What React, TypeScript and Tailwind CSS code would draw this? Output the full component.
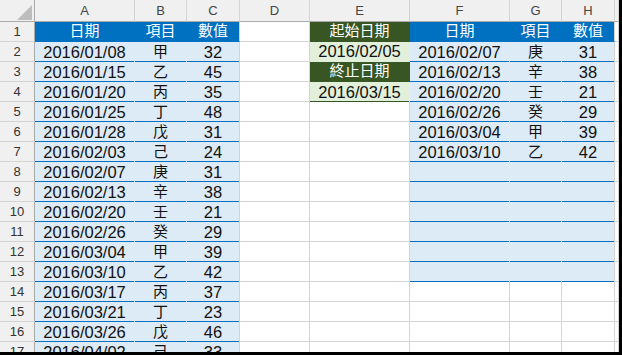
import React from "react";

type Kind =
  | "white"
  | "blueHead"
  | "blueHeadEnd"
  | "blueBody"
  | "blueBodyEnd"
  | "greenHead"
  | "greenBody"
  | "greenBodyEnd";

// gridlines are right/bottom borders; table rules are drawn as a 1px inset shadow
const cellClass: Record<Kind, string> = {
  white: "bg-white border-r border-b border-[#d4d4d4]",
  blueHead: "bg-[#0070c0] text-white border-r border-b border-[#0070c0]",
  blueHeadEnd: "bg-[#0070c0] text-white border-r border-b border-[#0070c0] border-r-[#d4d4d4]",
  blueBody: "bg-[#ddebf7] text-[#111111] border-r border-r-[#ddebf7] shadow-[inset_0_-1px_0_#0070c0]",
  blueBodyEnd: "bg-[#ddebf7] text-[#111111] border-r border-r-[#d4d4d4] shadow-[inset_0_-1px_0_#0070c0]",
  greenHead: "bg-[#375623] text-white border-r border-b border-[#375623]",
  greenBody: "bg-[#e2efda] text-[#111111] border-r border-b border-[#e2efda]",
  greenBodyEnd: "bg-[#e2efda] text-[#111111] border-r border-r-[#e2efda] shadow-[inset_0_-1px_0_#375623]",
};

const columns = ["A", "B", "C", "D", "E", "F", "G", "H", ""];

const records: [string, string, string][] = [
  ["2016/01/08", "甲", "32"],
  ["2016/01/15", "乙", "45"],
  ["2016/01/20", "丙", "35"],
  ["2016/01/25", "丁", "48"],
  ["2016/01/28", "戊", "31"],
  ["2016/02/03", "己", "24"],
  ["2016/02/07", "庚", "31"],
  ["2016/02/13", "辛", "38"],
  ["2016/02/20", "壬", "21"],
  ["2016/02/26", "癸", "29"],
  ["2016/03/04", "甲", "39"],
  ["2016/03/10", "乙", "42"],
  ["2016/03/17", "丙", "37"],
  ["2016/03/21", "丁", "23"],
  ["2016/03/26", "戊", "46"],
  ["2016/04/02", "己", "33"],
];

const filtered: [string, string, string][] = [
  ["2016/02/07", "庚", "31"],
  ["2016/02/13", "辛", "38"],
  ["2016/02/20", "壬", "21"],
  ["2016/02/26", "癸", "29"],
  ["2016/03/04", "甲", "39"],
  ["2016/03/10", "乙", "42"],
];

const headers = ["日期", "項目", "數值"];

type Cell = { kind: Kind; text?: string; cjk?: boolean };

function buildRow(r: number): Cell[] {
  const cells: Cell[] = [];
  // A..C: source table
  for (let c = 0; c < 3; c++) {
    const end = c === 2;
    if (r === 1) cells.push({ kind: end ? "blueHeadEnd" : "blueHead", text: headers[c], cjk: true });
    else cells.push({ kind: end ? "blueBodyEnd" : "blueBody", text: records[r - 2]?.[c], cjk: c === 1 });
  }
  // D
  cells.push({ kind: "white" });
  // E: criteria block
  if (r === 1) cells.push({ kind: "greenHead", text: "起始日期", cjk: true });
  else if (r === 2) cells.push({ kind: "greenBody", text: "2016/02/05" });
  else if (r === 3) cells.push({ kind: "greenHead", text: "終止日期", cjk: true });
  else if (r === 4) cells.push({ kind: "greenBodyEnd", text: "2016/03/15" });
  else cells.push({ kind: "white" });
  // F..H: result table
  for (let c = 0; c < 3; c++) {
    const end = c === 2;
    if (r === 1) cells.push({ kind: end ? "blueHeadEnd" : "blueHead", text: headers[c], cjk: true });
    else if (r <= 13) cells.push({ kind: end ? "blueBodyEnd" : "blueBody", text: filtered[r - 2]?.[c], cjk: c === 1 });
    else cells.push({ kind: "white" });
  }
  // I
  cells.push({ kind: "white" });
  return cells;
}

function CornerCell() {
  return (
    <div className="relative h-[22px] border-r border-b border-[#ababab] bg-[#f0f0f0]">
      <svg className="absolute left-[17px] top-[5px]" width="15" height="15" viewBox="0 0 15 15">
        <polygon points="15,0 15,15 0,15" fill="#bdbdbd" />
      </svg>
    </div>
  );
}

export default function App() {
  const rows = Array.from({ length: 17 }, (_, i) => i + 1);
  return (
    <div className="w-[622px] h-[355px] overflow-hidden bg-white border-r-[3px] border-b-[3px] border-black font-['Liberation_Sans','Noto_Sans_CJK_TC',sans-serif]">
      <div className="grid grid-cols-[35px_100px_52px_53px_70px_100px_100px_52px_53px_1fr]">
        <CornerCell />
        {columns.map((col, i) => (
          <div
            key={`h${i}`}
            className="flex h-[22px] items-center justify-center border-r border-b border-[#d4d4d4] border-b-[#ababab] bg-[#f0f0f0] text-[13px] text-[#444]"
          >
            {col}
          </div>
        ))}
        {rows.map((r) => (
          <React.Fragment key={r}>
            <div className="flex h-[20px] items-center justify-center border-r border-b border-[#d4d4d4] border-r-[#ababab] bg-[#f0f0f0] text-[13px] text-[#333]">
              {r}
            </div>
            {buildRow(r).map((cell, c) => (
              <div
                key={c}
                className={`flex h-[20px] items-center justify-center overflow-hidden whitespace-nowrap ${cellClass[cell.kind]} ${cell.cjk ? "text-[15px]" : "text-[16.5px]"}`}
              >
                {cell.text}
              </div>
            ))}
          </React.Fragment>
        ))}
      </div>
    </div>
  );
}
